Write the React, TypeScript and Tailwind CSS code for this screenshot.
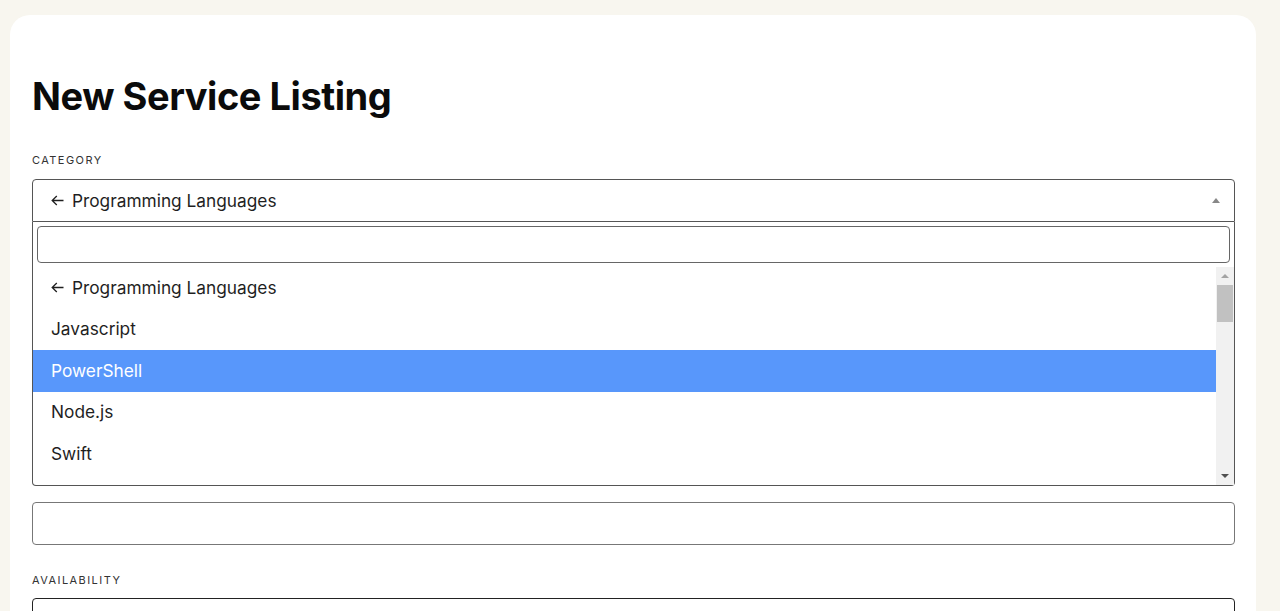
const options = ["Javascript", "PowerShell", "Node.js", "Swift"];

function Label({ children }: { children: string }) {
  return (
    <div className="text-[11px] leading-[14px] tracking-[0.13em] text-[#333] uppercase">
      {children}
    </div>
  );
}

function BackArrow() {
  return (
    <svg width="13" height="11" viewBox="0 0 13 11" fill="none" stroke="#1f1f1f" strokeWidth="1.3">
      <path d="M12.5 5.5H1.2M5.8 1 1.2 5.5 5.8 10" />
    </svg>
  );
}

export default function App() {
  return (
    <div className="h-[611px] overflow-hidden bg-[#f8f6ef] pl-[10px] pr-[24px] pt-[15px] font-['Inter',sans-serif]">
      <div className="rounded-[20px] bg-white pl-[22px] pr-[21px] pt-[58px] pb-10">
        <h1 className="text-[38px] leading-[46px] font-bold tracking-[-0.012em] text-[#0b0b0b]">
          New Service Listing
        </h1>

        <div className="mt-[34px]">
          <Label>Category</Label>
        </div>

        <div className="mt-[12px]">
          {/* select box */}
          <div className="flex h-[43px] items-center justify-between rounded-t-[4px] border border-[#555] pl-[18px] pr-[14px] text-[17.3px] text-[#1f1f1f]">
            <span className="flex items-center gap-[8px]">
              <BackArrow />
              Programming Languages
            </span>
            <span className="h-0 w-0 border-x-[4px] border-b-[5px] border-x-transparent border-b-[#888]" />
          </div>

          {/* dropdown */}
          <div className="rounded-b-[4px] border border-t-0 border-[#555] pt-[4px]">
            <div className="px-[4px]">
              <div className="h-[37px] rounded-[4px] border border-[#666]" />
            </div>
            <div className="mt-[4px] flex h-[218px] overflow-hidden">
              <ul className="flex-1 text-[17.3px] text-[#1f1f1f]">
                <li className="flex h-[41.5px] items-center gap-[8px] px-[18px]">
                  <BackArrow />
                  Programming Languages
                </li>
                {options.map((o) => (
                  <li
                    key={o}
                    className={
                      o === "PowerShell"
                        ? "flex h-[41.5px] items-center bg-[#5897fb] px-[18px] text-white"
                        : "flex h-[41.5px] items-center px-[18px]"
                    }
                  >
                    {o}
                  </li>
                ))}
              </ul>
              <div className="flex w-[18px] flex-col bg-[#f1f1f1]">
                <div className="flex h-[18px] items-center justify-center">
                  <span className="h-0 w-0 border-x-[4px] border-b-[4px] border-x-transparent border-b-[#a3a3a3]" />
                </div>
                <div className="mx-[1px] h-[37px] bg-[#c1c1c1]" />
                <div className="flex-1" />
                <div className="flex h-[18px] items-center justify-center">
                  <span className="h-0 w-0 border-x-[4px] border-t-[4px] border-x-transparent border-t-[#505050]" />
                </div>
              </div>
            </div>
          </div>
        </div>

        <div className="mt-[16px] h-[43px] rounded-[4px] border border-[#777]" />

        <div className="mt-[28px]">
          <Label>Availability</Label>
        </div>
        <div className="mt-[11px] h-[43px] rounded-[4px] border border-[#222]" />
      </div>
    </div>
  );
}
